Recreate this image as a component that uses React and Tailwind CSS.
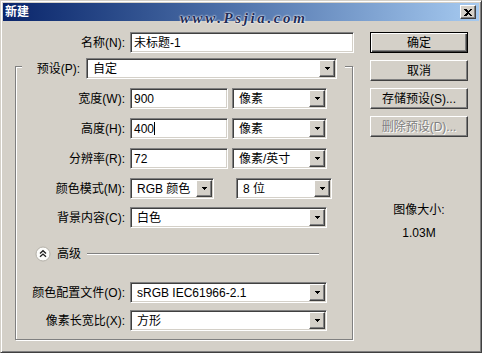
import React from 'react';

// Windows classic bevels
const sunken =
  'border border-t-[#808080] border-l-[#808080] border-b-white border-r-white shadow-[inset_1px_1px_0_#404040,inset_-1px_-1px_0_#d4d0c8]';
const raised =
  'border border-t-white border-l-white border-b-[#404040] border-r-[#404040] shadow-[inset_-1px_-1px_0_#808080]';

const TextBox = ({ value, className = '', caret }) => (
  <div className={`${sunken} h-[21px] bg-white flex items-center pl-[3px] ${className}`}>
    <span>{value}</span>
    {caret && <span className="w-px h-[13px] bg-black" />}
  </div>
);

const DropArrow = () => (
  <div className={`${raised} w-[16px] h-full bg-[#d4d0c8] flex items-center justify-center`}>
    <svg width="5" height="3" viewBox="0 0 5 3" shapeRendering="crispEdges">
      <rect x="0" y="0" width="5" height="1" fill="#000" />
      <rect x="1" y="1" width="3" height="1" fill="#000" />
      <rect x="2" y="2" width="1" height="1" fill="#000" />
    </svg>
  </div>
);

const Select = ({ value, className = '' }) => (
  <div className={`${sunken} h-[21px] bg-white flex items-stretch p-px ${className}`}>
    <div className="flex-1 flex items-center pl-[5px] whitespace-nowrap">{value}</div>
    <DropArrow />
  </div>
);

const Button = ({ children, primary, disabled }) => {
  const frame = primary
    ? 'border border-black shadow-[inset_1px_1px_0_#fff,inset_-1px_-1px_0_#404040,inset_-2px_-2px_0_#808080]'
    : raised;
  return (
    <div className={`${frame} w-[98px] h-[21px] flex items-center justify-center bg-[#d4d0c8]`}>
      <span className={disabled ? 'text-[#808080] [text-shadow:1px_1px_0_#fff]' : 'text-black'}>
        {children}
      </span>
    </div>
  );
};

const Row = ({ label, children, className = '' }) => (
  <div className={`flex items-center h-[21px] ${className}`}>
    <div className="w-[109px] text-right whitespace-nowrap">{label}</div>
    <div className="ml-[5px] flex gap-[4px]">{children}</div>
  </div>
);

const AdvancedIcon = () => (
  <svg width="16" height="16" viewBox="0 0 16 16">
    <circle cx="8" cy="8" r="7" fill="#fdfdfb" stroke="#b4b0a8" strokeWidth="1" />
    <polyline points="5,7.5 8,4.8 11,7.5" fill="none" stroke="#202020" strokeWidth="1.4" />
    <polyline points="5,10.8 8,8.1 11,10.8" fill="none" stroke="#202020" strokeWidth="1.4" />
  </svg>
);

export default function App() {
  return (
    <div
      className={`relative w-[482px] h-[353px] bg-[#d4d0c8] p-[2px] border border-t-[#d4d0c8] border-l-[#d4d0c8] border-b-[#404040] border-r-[#404040] shadow-[inset_1px_1px_0_#fff,inset_-1px_-1px_0_#808080] text-[12px] text-black font-['Liberation_Sans','Noto_Sans_CJK_SC',sans-serif]`}
    >
      {/* title bar */}
      <div className="h-[18px] flex items-center justify-between pl-[2px] pr-[3px] bg-linear-to-r from-[#0a246a] to-[#a6caf0]">
        <span className="text-white font-bold">新建</span>
        <div className={`${raised} w-[16px] h-[14px] bg-[#d4d0c8] flex items-center justify-center`}>
          <svg width="8" height="7" viewBox="0 0 8 7" shapeRendering="crispEdges">
            <path d="M0 0h2l2 2 2-2h2L5 3.5 8 7H6L4 5 2 7H0l3-3.5z" fill="#000" />
          </svg>
        </div>
      </div>

      {/* watermark over the title bar */}
      <div className="absolute left-[179px] top-[6px] font-['Liberation_Serif',serif] italic font-bold text-[15px] tracking-[2.6px] text-[#1e2c55] [text-shadow:0_0_2px_#fff,0_0_2px_#fff]">
        www.Psjia.com
      </div>

      <div className="flex">
        {/* left column */}
        <div className="w-[351px]">
          <div className="mt-[11px] flex items-center">
            <div className="w-[122px] text-right">名称(N):</div>
            <TextBox value="未标题-1" className="ml-[5px] w-[224px]" />
          </div>

          <div className="mt-[13px] ml-[12px] w-[338px] h-[274px] border border-[#808080] shadow-[inset_1px_1px_0_#fff,1px_1px_0_#fff]">
            <div className="-mt-[9px] ml-[6px] w-[323px] h-[21px] flex items-center bg-[#d4d0c8]">
              <div className="w-[58px] text-right">预设(P):</div>
              <Select value="自定" className="ml-[6px] w-[251px]" />
            </div>

            <Row label="宽度(W):" className="mt-[9px]">
              <TextBox value="900" className="w-[98px]" />
              <Select value="像素" className="w-[95px]" />
            </Row>
            <Row label="高度(H):" className="mt-[9px]">
              <TextBox value="400" caret className="w-[98px]" />
              <Select value="像素" className="w-[95px]" />
            </Row>
            <Row label="分辨率(R):" className="mt-[9px]">
              <TextBox value="72" className="w-[98px]" />
              <Select value="像素/英寸" className="w-[95px]" />
            </Row>
            <Row label="颜色模式(M):" className="mt-[9px]">
              <Select value="RGB 颜色" className="w-[84px]" />
              <div className="w-[14px]" />
              <Select value="8 位" className="w-[96px]" />
            </Row>
            <Row label="背景内容(C):" className="mt-[8px]">
              <Select value="白色" className="w-[197px]" />
            </Row>

            <div className="mt-[18px] h-[16px] flex items-center">
              <div className="ml-[19px]">
                <AdvancedIcon />
              </div>
              <span className="ml-[6px]">高级</span>
              <div className="flex-1 ml-[6px] mr-[33px] h-[2px] border-t border-t-[#808080] border-b border-b-white" />
            </div>

            <Row label="颜色配置文件(O):" className="mt-[20px]">
              <Select value="sRGB IEC61966-2.1" className="w-[197px]" />
            </Row>
            <Row label="像素长宽比(X):" className="mt-[7px]">
              <Select value="方形" className="w-[197px]" />
            </Row>
          </div>
        </div>

        {/* right column */}
        <div className="pl-[16px]">
          <div className="mt-[11px] flex flex-col gap-[7px]">
            <Button primary>确定</Button>
            <Button>取消</Button>
            <Button>存储预设(S)...</Button>
            <Button disabled>删除预设(D)...</Button>
          </div>
          <div className="w-[98px] mt-[65px] text-center leading-[16px]">
            <div>图像大小:</div>
            <div className="mt-[7px]">1.03M</div>
          </div>
        </div>
      </div>
    </div>
  );
}
